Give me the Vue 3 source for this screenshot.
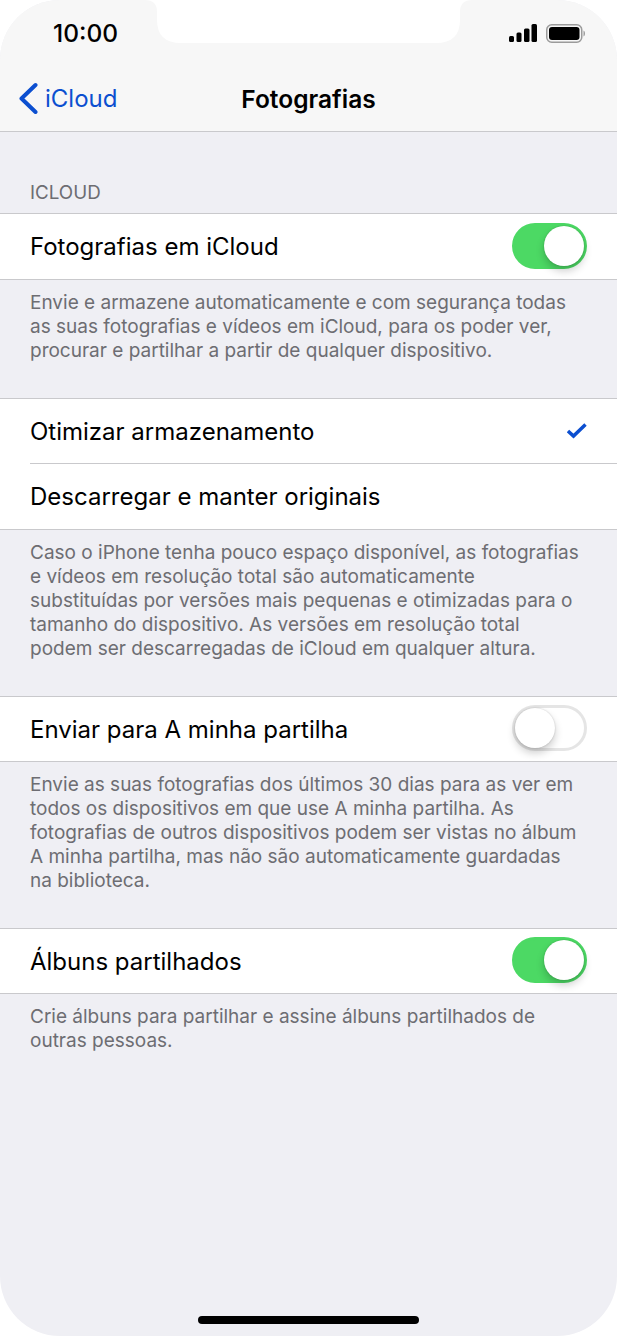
<template>
  <div class="screen">
    <svg class="notch" width="617" height="43" viewBox="0 0 617 43">
      <path d="M145 0 Q157 0 157 12 L157 20 Q157 43 181 43 L436 43 Q460 43 460 20 L460 12 Q460 0 472 0 Z" fill="#fff" />
    </svg>

    <header class="nav">
      <div class="status">
        <span class="time">10:00</span>
        <div class="status-icons">
          <svg width="28" height="18" viewBox="0 0 28 18">
            <rect x="0" y="12" width="5" height="6" rx="1.500" fill="#000" />
            <rect x="7.500" y="8.500" width="5" height="9.500" rx="1.500" fill="#000" />
            <rect x="15" y="4.500" width="5.500" height="13.500" rx="1.500" fill="#000" />
            <rect x="22.500" y="0" width="5.500" height="18" rx="1.500" fill="#000" />
          </svg>
          <svg width="39" height="19" viewBox="0 0 39 19">
            <rect x="0.750" y="0.750" width="35" height="17.500" rx="5" fill="none" stroke="#9b9b9b" stroke-width="1.500" />
            <rect x="3" y="3" width="30.500" height="13" rx="3" fill="#000" />
            <path d="M37.500 6.500c.9.3 1.500 1.500 1.500 3s-.6 2.700-1.500 3z" fill="#9b9b9b" />
          </svg>
        </div>
      </div>
      <div class="nav-bar">
        <div class="back">
          <svg width="20" height="32" viewBox="0 0 20 32">
            <path d="M17.500 3 L3.500 16.500 L17.500 30" fill="none" stroke="#0c4fd0" stroke-width="4" stroke-linecap="round" stroke-linejoin="round" />
          </svg>
          <span>iCloud</span>
        </div>
        <span class="title">Fotografias</span>
      </div>
    </header>

    <main class="content">
      <div class="section-title">ICLOUD</div>

      <template v-for="group in groups" :key="group.note">
        <div class="group">
          <div v-for="row in group.rows" :key="row.label" class="row">
            <span>{{ row.label }}</span>
            <div v-if="row.toggle !== undefined" class="toggle" :class="{ on: row.toggle }">
              <div class="knob"></div>
            </div>
            <svg v-if="row.checked" class="check" width="20" height="16" viewBox="0 0 20 16">
              <path d="M1 8 L6.500 13 L18.500 1.500" fill="none" stroke="#0c4fd0" stroke-width="3.500" />
            </svg>
          </div>
        </div>
        <p class="note">
          <span v-for="line in group.lines" :key="line" class="line">{{ line }}</span>
        </p>
      </template>
    </main>

    <div class="home-bar"></div>
  </div>
</template>

<script setup>
const groups = [
  {
    note: 'icloud',
    rows: [{ label: 'Fotografias em iCloud', toggle: true }],
    lines: [
      'Envie e armazene automaticamente e com segurança todas',
      'as suas fotografias e vídeos em iCloud, para os poder ver,',
      'procurar e partilhar a partir de qualquer dispositivo.'
    ]
  },
  {
    note: 'storage',
    rows: [
      { label: 'Otimizar armazenamento', checked: true },
      { label: 'Descarregar e manter originais' }
    ],
    lines: [
      'Caso o iPhone tenha pouco espaço disponível, as fotografias',
      'e vídeos em resolução total são automaticamente',
      'substituídas por versões mais pequenas e otimizadas para o',
      'tamanho do dispositivo. As versões em resolução total',
      'podem ser descarregadas de iCloud em qualquer altura.'
    ]
  },
  {
    note: 'stream',
    rows: [{ label: 'Enviar para A minha partilha', toggle: false }],
    lines: [
      'Envie as suas fotografias dos últimos 30 dias para as ver em',
      'todos os dispositivos em que use A minha partilha. As',
      'fotografias de outros dispositivos podem ser vistas no álbum',
      'A minha partilha, mas não são automaticamente guardadas',
      'na biblioteca.'
    ]
  },
  {
    note: 'shared',
    rows: [{ label: 'Álbuns partilhados', toggle: true }],
    lines: [
      'Crie álbuns para partilhar e assine álbuns partilhados de',
      'outras pessoas.'
    ]
  }
]
</script>

<style>
html,
body {
  margin: 0;
  background: #fff;
}
</style>

<style scoped>
.screen {
  position: relative;
  width: 617px;
  height: 1336px;
  overflow: hidden;
  border-radius: 60px;
  background: #efeff4;
  font-family: Inter, "Liberation Sans", sans-serif;
  color: #000;
}

.notch {
  position: absolute;
  top: 0;
  left: 0;
}

.nav {
  height: 131px;
  background: #f7f7f7;
  border-bottom: 1px solid #c9c9cc;
}

.status {
  height: 66px;
  display: flex;
  justify-content: space-between;
  align-items: center;
  padding: 0 32px 0 53px;
}

.time {
  font-size: 24.500px;
  font-weight: 500;
}

.status-icons {
  display: flex;
  align-items: center;
  gap: 9px;
}

.nav-bar {
  position: relative;
  height: 65px;
  display: flex;
  align-items: center;
  justify-content: center;
}

.back {
  position: absolute;
  left: 18px;
  top: 16px;
  display: flex;
  align-items: center;
  gap: 7px;
  color: #0c4fd0;
  font-size: 24px;
}

.title {
  font-size: 24.500px;
  font-weight: 600;
}

.section-title {
  padding: 50px 30px 9px;
  font-size: 18.800px;
  line-height: 22px;
  color: #6d6d72;
}

.group {
  background: #fff;
  border-top: 1px solid #c9c9cc;
  border-bottom: 1px solid #c9c9cc;
}

.row {
  position: relative;
  height: 64px;
  display: flex;
  align-items: center;
  justify-content: space-between;
  padding: 0 30px;
  font-size: 24px;
}

.section-title + .group .row {
  height: 65px;
}

.row + .row {
  height: 66px;
}

.row + .row::before {
  content: "";
  position: absolute;
  top: 0;
  left: 30px;
  right: 0;
  height: 1px;
  background: #c9c9cc;
}

.toggle {
  position: relative;
  width: 75px;
  height: 46px;
  margin-top: -2px;
  box-sizing: border-box;
  border-radius: 23px;
  background: #fff;
  border: 3px solid #e5e5e5;
}

.toggle.on {
  background: #4cd964;
  border-color: #4cd964;
}

.knob {
  position: absolute;
  top: 0;
  left: 0;
  width: 40px;
  height: 40px;
  border-radius: 50%;
  background: #fff;
  box-shadow: 0 5px 8px rgba(0, 0, 0, 0.2), 0 0 2px rgba(0, 0, 0, 0.2);
}

.toggle.on .knob {
  left: 29px;
}

.note {
  margin: 0;
  padding: 11px 30px 35px;
  font-size: 19px;
  line-height: 24px;
  color: #6d6d72;
}

.line {
  display: block;
  white-space: nowrap;
}

.home-bar {
  position: absolute;
  bottom: 12px;
  left: 198px;
  width: 221px;
  height: 8px;
  border-radius: 4px;
  background: #000;
}
</style>
